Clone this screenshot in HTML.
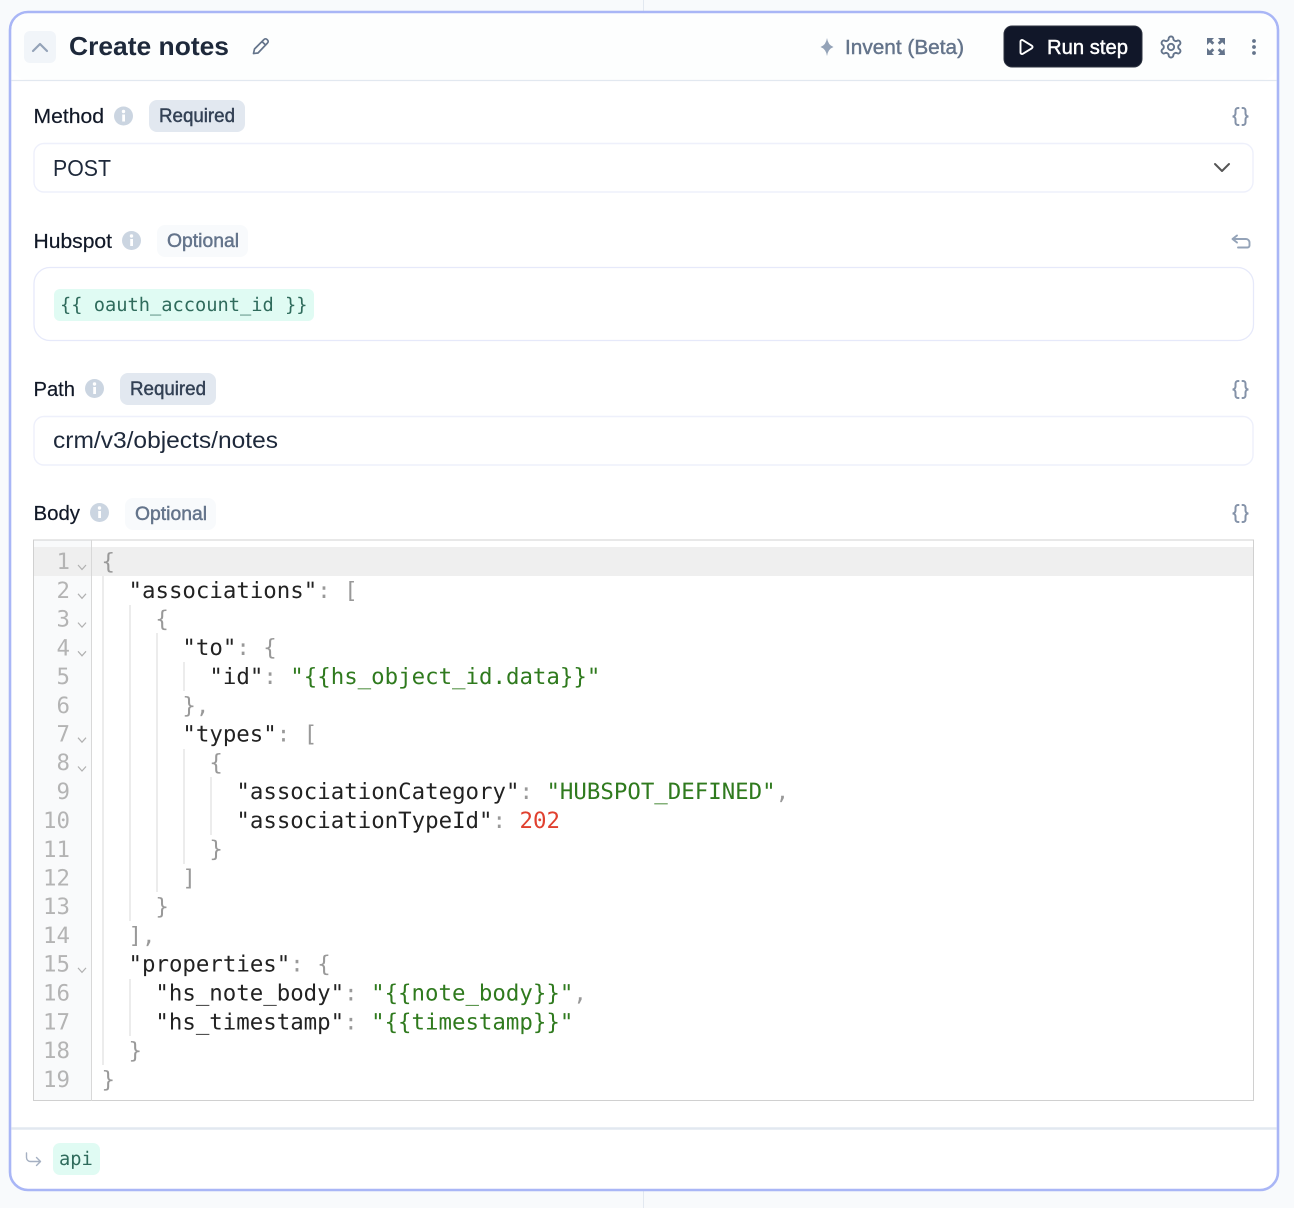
<!DOCTYPE html>
<html><head><meta charset="utf-8"><style>
html,body{margin:0;padding:0;background:#f8fafc;width:1294px;height:1208px;overflow:hidden}
svg{display:block}
.s{font-family:"Liberation Sans",sans-serif}
.m{font-family:"DejaVu Sans Mono",monospace;text-rendering:geometricPrecision}
.l{font-size:20.5px;fill:#111827;stroke:#111827;stroke-width:.2px}
.b{font-size:19px;stroke-width:.45px}
.c{font-size:22.4px;fill:#222}
.p{fill:#999}.g{fill:#2f7a1e}.n{fill:#e0402f}
.ln{font-size:22.4px;fill:#b4b4b4;text-anchor:end}
.gd{stroke:#e8e8e8;stroke-width:1.6}
.i{fill:none;stroke:#64748b;stroke-width:1.8;stroke-linecap:round;stroke-linejoin:round}
</style></head><body>
<svg width="1294" height="1208" viewBox="0 0 1294 1208" xmlns="http://www.w3.org/2000/svg">
<rect width="1294" height="1208" fill="#f8fafc"/>
<path d="M643.500 0V12M643.500 1190V1208" stroke="#e2e8f0" stroke-width="1"/>
<rect x="10" y="12" width="1268" height="1178" rx="18" fill="#fff" stroke="#a9b6f6" stroke-width="2.600"/>
<rect x="11.500" y="13.500" width="1265" height="66.500" rx="16" fill="#fdfefe"/>
<path d="M11.500 80.500H1276.500" stroke="#e2e8f0" stroke-width="1.300"/>

<rect x="24" y="31" width="32" height="32" rx="6" fill="#f1f5f9"/>
<path d="M33 51l7-7 7 7" fill="none" stroke="#94a3b8" stroke-width="2.200" stroke-linecap="round" stroke-linejoin="round"/>
<text x="69" y="55" class="s" font-size="26" font-weight="700" fill="#1e293b" textLength="160" lengthAdjust="spacingAndGlyphs">Create notes</text>
<g class="i" style="stroke-width:1.700"><path d="M253.500 53.500l1-4.500 9.500-9.500a2 2 0 0 1 3 0l.5.500a2 2 0 0 1 0 3L258 53l-4.500.500zM262 41.500l3.500 3.500"/></g>

<path d="M827 38q1 7 6.500 9q-5.500 2-6.500 9q-1-7-6.500-9q5.500-2 6.500-9z" fill="#94a3b8"/>
<text x="845" y="54" class="s b" fill="#64748b" stroke="#64748b" textLength="119" lengthAdjust="spacingAndGlyphs" style="font-size:20.500px">Invent (Beta)</text>
<rect x="1004" y="26" width="138" height="41" rx="8" fill="#111729" stroke="#2d3340" stroke-width="1"/>
<path d="M1020.500 41.500a1.500 1.500 0 0 1 2.300-1.300l9 5.500a1.500 1.500 0 0 1 0 2.600l-9 5.500a1.500 1.500 0 0 1-2.300-1.300z" fill="none" stroke="#fff" stroke-width="1.900" stroke-linejoin="round"/>
<text x="1047" y="54" class="s b" fill="#fff" stroke="#fff" textLength="81" lengthAdjust="spacingAndGlyphs" style="font-size:20.500px">Run step</text>
<g transform="translate(1158.400 34.400) scale(1.050)" class="i" style="stroke-width:1.800"><path d="M12.220 2h-.44a2 2 0 0 0-2 2v.18a2 2 0 0 1-1 1.730l-.43.250a2 2 0 0 1-2 0l-.15-.08a2 2 0 0 0-2.730.730l-.22.380a2 2 0 0 0 .730 2.730l.15.100a2 2 0 0 1 1 1.720v.510a2 2 0 0 1-1 1.740l-.15.090a2 2 0 0 0-.730 2.730l.22.380a2 2 0 0 0 2.730.730l.15-.08a2 2 0 0 1 2 0l.43.250a2 2 0 0 1 1 1.730V20a2 2 0 0 0 2 2h.44a2 2 0 0 0 2-2v-.18a2 2 0 0 1 1-1.730l.43-.25a2 2 0 0 1 2 0l.15.080a2 2 0 0 0 2.730-.73l.22-.39a2 2 0 0 0-.73-2.730l-.15-.08a2 2 0 0 1-1-1.740v-.5a2 2 0 0 1 1-1.740l.15-.09a2 2 0 0 0 .73-2.730l-.22-.38a2 2 0 0 0-2.730-.73l-.15.080a2 2 0 0 1-2 0l-.43-.25a2 2 0 0 1-1-1.730V4a2 2 0 0 0-2-2z"/><circle cx="12" cy="12" r="3"/></g>
<g fill="#64748b"><path d="M1207 38h7l-2.200 2.200 2.500 2.500-2 2-2.500-2.500L1207 45zM1225 38h-7l2.200 2.200-2.500 2.500 2 2 2.500-2.500L1225 45zM1207 55h7l-2.200-2.200 2.500-2.500-2-2-2.500 2.500L1207 48zM1225 55h-7l2.200-2.200-2.500-2.500 2-2 2.500 2.500 2.300-2.300z"/>
<circle cx="1254" cy="41" r="1.900"/><circle cx="1254" cy="47" r="1.900"/><circle cx="1254" cy="53" r="1.900"/></g>

<!-- Method -->
<text x="33.500" y="123" class="s l" textLength="70.500" lengthAdjust="spacingAndGlyphs">Method</text>
<circle cx="123.500" cy="116" r="9.500" fill="#cbd5e1"/><rect x="122.200" y="114.500" width="2.800" height="7" fill="#fff"/><circle cx="123.500" cy="111.500" r="1.700" fill="#fff"/>
<rect x="149" y="100" width="96" height="32" rx="8" fill="#e2e8f0"/>
<text x="159" y="122" class="s b" fill="#334155" stroke="#334155" textLength="76" lengthAdjust="spacingAndGlyphs">Required</text>
<g id="br" fill="none" stroke="#8492a8" stroke-width="2" stroke-linecap="round"><path d="M1238.500 108h-.500a2.500 2.500 0 0 0-2.500 2.500v3a3 3 0 0 1-3 3 3 3 0 0 1 3 3v3a2.500 2.500 0 0 0 2.500 2.500h.500M1242.500 108h.500a2.500 2.500 0 0 1 2.500 2.500v3a3 3 0 0 0 3 3 3 3 0 0 0-3 3v3a2.500 2.500 0 0 1-2.500 2.500h-.500"/></g>
<rect x="34" y="143.500" width="1219" height="48.500" rx="10" fill="#fff" stroke="#eef0fb" stroke-width="1.400"/>
<text x="53" y="176" class="s" font-size="23" fill="#1e293b" textLength="58" lengthAdjust="spacingAndGlyphs">POST</text>
<path d="M1215 164l7 7 7-7" fill="none" stroke="#555" stroke-width="2" stroke-linecap="round" stroke-linejoin="round"/>

<!-- Hubspot -->
<text x="33.500" y="248" class="s l" textLength="78.500" lengthAdjust="spacingAndGlyphs">Hubspot</text>
<circle cx="131.500" cy="240.500" r="9.500" fill="#cbd5e1"/><rect x="130.200" y="239" width="2.800" height="7" fill="#fff"/><circle cx="131.500" cy="236" r="1.700" fill="#fff"/>
<rect x="157" y="225" width="91" height="32" rx="8" fill="#f8fafc"/>
<text x="167" y="247" class="s b" fill="#64748b" stroke="#64748b" textLength="72" lengthAdjust="spacingAndGlyphs">Optional</text>
<path d="M1237 235.500l-4.500 3.500 4.500 3.500M1233 239h13a3.500 3.500 0 0 1 3.500 3.500v3a2 2 0 0 1-2 2H1238" fill="none" stroke="#94a3b8" stroke-width="1.900" stroke-linecap="round" stroke-linejoin="round"/>
<rect x="34" y="267.500" width="1219.500" height="73" rx="16" fill="#fff" stroke="#e6e9fa" stroke-width="1.300"/>
<rect x="54" y="289" width="260" height="32" rx="6" fill="#e0fbf3"/>
<text x="60" y="311" class="m" font-size="18.700" fill="#2f6b5c">{{ oauth_account_id }}</text>

<!-- Path -->
<text x="33.500" y="396" class="s l" textLength="41.500" lengthAdjust="spacingAndGlyphs">Path</text>
<circle cx="94.500" cy="388.500" r="9.500" fill="#cbd5e1"/><rect x="93.200" y="387" width="2.800" height="7" fill="#fff"/><circle cx="94.500" cy="384" r="1.700" fill="#fff"/>
<rect x="120" y="373" width="96" height="32" rx="8" fill="#e2e8f0"/>
<text x="130" y="395" class="s b" fill="#334155" stroke="#334155" textLength="76" lengthAdjust="spacingAndGlyphs">Required</text>
<use href="#br" y="273"/>
<rect x="34" y="416.500" width="1219" height="48.500" rx="10" fill="#fff" stroke="#eef0fb" stroke-width="1.400"/>
<text x="53" y="448" class="s" font-size="23" fill="#1e293b" textLength="225" lengthAdjust="spacingAndGlyphs">crm/v3/objects/notes</text>

<!-- Body -->
<text x="33.500" y="520" class="s l" textLength="46.500" lengthAdjust="spacingAndGlyphs">Body</text>
<circle cx="99.500" cy="512.500" r="9.500" fill="#cbd5e1"/><rect x="98.200" y="511" width="2.800" height="7" fill="#fff"/><circle cx="99.500" cy="508" r="1.700" fill="#fff"/>
<rect x="125" y="498" width="91" height="32" rx="8" fill="#f8fafc"/>
<text x="135" y="520" class="s b" fill="#64748b" stroke="#64748b" textLength="72" lengthAdjust="spacingAndGlyphs">Optional</text>
<use href="#br" y="397"/>

<!-- Editor -->
<rect x="33.500" y="540" width="1220" height="561" fill="#fff"/>
<rect x="33.500" y="540" width="58" height="561" fill="#f9fafb"/>
<rect x="33.500" y="547" width="1220" height="29" fill="#efefef"/>
<rect x="33.500" y="540" width="1220" height="560.500" fill="none" stroke="#d0d0d0" stroke-width="1"/>
<path d="M91.500 540V1101" stroke="#d8d8d8" stroke-width="1"/>
<path class="gd" d="M103 576V1065M130 605V921M130 979V1036M157 633V892M184 662V691M184 749V864M211 777V835"/>

<g class="m ln">
<text x="70" y="569">1</text><text x="70" y="597.800">2</text><text x="70" y="626.300">3</text><text x="70" y="655.300">4</text><text x="70" y="684.100">5</text><text x="70" y="712.900">6</text><text x="70" y="741.700">7</text><text x="70" y="770">8</text><text x="70" y="799.200">9</text><text x="70" y="828">10</text><text x="70" y="856.800">11</text><text x="70" y="885.600">12</text><text x="70" y="914">13</text><text x="70" y="943">14</text><text x="70" y="971.500">15</text><text x="70" y="1000.700">16</text><text x="70" y="1029.500">17</text><text x="70" y="1058">18</text><text x="70" y="1087">19</text>
</g>
<path fill="none" stroke="#b0b0b0" stroke-width="1.200" d="M78 565l4 4.500 4-4.500M78 593.800l4 4.500 4-4.500M78 622.600l4 4.500 4-4.500M78 651.300l4 4.500 4-4.500M78 737.700l4 4.500 4-4.500M78 766.500l4 4.500 4-4.500M78 967.900l4 4.500 4-4.500"/>

<g class="m c">
<text x="101.500" y="569" class="p">{</text>
<text x="128.500" y="597.800">"associations"<tspan class="p">: [</tspan></text>
<text x="155.400" y="626.300" class="p">{</text>
<text x="182.400" y="655">"to"<tspan class="p">: {</tspan></text>
<text x="209.400" y="684.100">"id"<tspan class="p">: </tspan><tspan class="g">"{{hs_object_id.data}}"</tspan></text>
<text x="182.400" y="712.900" class="p">},</text>
<text x="182.400" y="741.700">"types"<tspan class="p">: [</tspan></text>
<text x="209.400" y="770" class="p">{</text>
<text x="236.400" y="799.200">"associationCategory"<tspan class="p">: </tspan><tspan class="g">"HUBSPOT_DEFINED"</tspan><tspan class="p">,</tspan></text>
<text x="236.400" y="828">"associationTypeId"<tspan class="p">: </tspan><tspan class="n">202</tspan></text>
<text x="209.400" y="856.500" class="p">}</text>
<text x="182.400" y="885.600" class="p">]</text>
<text x="155.400" y="914" class="p">}</text>
<text x="128.500" y="943" class="p">],</text>
<text x="128.500" y="971.500">"properties"<tspan class="p">: {</tspan></text>
<text x="155.400" y="1000.700">"hs_note_body"<tspan class="p">: </tspan><tspan class="g">"{{note_body}}"</tspan><tspan class="p">,</tspan></text>
<text x="155.400" y="1029.500">"hs_timestamp"<tspan class="p">: </tspan><tspan class="g">"{{timestamp}}"</tspan></text>
<text x="128.500" y="1058" class="p">}</text>
<text x="101.500" y="1087" class="p">}</text>
</g>

<!-- Footer -->
<path d="M11.500 1128.500H1276.500" stroke="#e2e8f0" stroke-width="2.600"/>
<path d="M26.500 1153v4.500a4 4 0 0 0 4 4H40M36.500 1157.500l4 4-4 4" fill="none" stroke="#a5b0c2" stroke-width="1.400" stroke-linecap="round" stroke-linejoin="round"/>
<rect x="53" y="1143" width="47" height="32" rx="7" fill="#e0fbf3"/>
<text x="59" y="1165" class="m" font-size="18.700" fill="#2f6b5c">api</text>
</svg>
</body></html>
